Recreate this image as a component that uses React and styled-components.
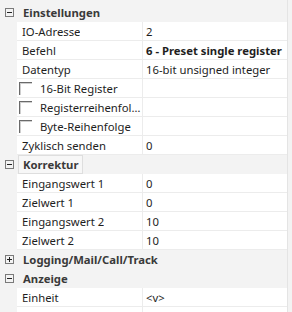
import React from "react";
import styled, { createGlobalStyle } from "styled-components";

const Global = createGlobalStyle`
  html, body { margin: 0; padding: 0; background: #f3f3f3; }
  body { font-family: "Noto Sans", "Segoe UI", sans-serif; font-size: 11.3px; color: #1e1e1e; }
  #root { width: 292px; height: 312px; overflow: hidden; }
`;

const Panel = styled.div`
  width: 288px;
  height: 312px;
  padding-top: 3px;
  box-sizing: border-box;
  border-right: 1px solid #e4e4e4;
  background: #f3f3f3;
`;

const CategoryRow = styled.div`
  display: grid;
  grid-template-columns: 17px 1fr;
  align-items: center;
  height: 19px;
  background: #f3f3f3;
`;

const Expander = styled.span`
  display: flex;
  justify-content: center;
  align-items: center;
  padding-left: 1px;
`;

const CategoryTitle = styled.span`
  justify-self: start;
  align-self: stretch;
  display: flex;
  align-items: center;
  box-sizing: border-box;
  font-weight: 700;
  color: #3a3a3a;
  padding: 0 4px;
  margin-left: 1px;
  white-space: nowrap;
  border: 1px solid ${(p) => (p.$focused ? "#dedede" : "transparent")};
  background: ${(p) => (p.$focused ? "#f7f7f7" : "transparent")};
`;

const PropRow = styled.div`
  display: grid;
  grid-template-columns: 17px 126px 1fr;
  height: 19px;
`;

const Gutter = styled.div`
  background: #f3f3f3;
`;

const Cell = styled.div`
  display: flex;
  align-items: center;
  gap: 8px;
  background: #fff;
  box-sizing: border-box;
  border-bottom: 1px solid #ececec;
  min-width: 0;
  white-space: nowrap;
  overflow: hidden;
`;

const LabelCell = styled(Cell)`
  border-right: 1px solid #ececec;
  padding-left: ${(p) => (p.$check ? "2px" : "5px")};
`;

const ValueCell = styled(Cell)`
  padding-left: 3px;
  font-weight: ${(p) => (p.$bold ? 700 : 400)};
`;

const LabelText = styled.span`
  overflow: hidden;
  text-overflow: ellipsis;
`;

const CheckBox = styled.span`
  flex: none;
  width: 13px;
  height: 13px;
  box-sizing: border-box;
  border-top: 1px solid #6a6a6a;
  border-left: 1px solid #6a6a6a;
  box-shadow: inset 1px 1px 0 #cfcfcf;
  background: #fff;
`;

const ExpandIcon = ({ open }) => (
  <svg width="9" height="9" viewBox="0 0 9 9">
    <rect x="0.5" y="0.5" width="8" height="8" fill="none" stroke="#7a7a7a" />
    <line x1="2" y1="4.5" x2="7" y2="4.5" stroke="#222" />
    {!open && <line x1="4.5" y1="2" x2="4.5" y2="7" stroke="#222" />}
  </svg>
);

const Category = ({ title, open = true, focused }) => (
  <CategoryRow>
    <Expander>
      <ExpandIcon open={open} />
    </Expander>
    <CategoryTitle $focused={focused}>{title}</CategoryTitle>
  </CategoryRow>
);

const Prop = ({ label, value, bold, check }) => (
  <PropRow>
    <Gutter />
    <LabelCell $check={check}>
      {check && <CheckBox />}
      <LabelText>{label}</LabelText>
    </LabelCell>
    <ValueCell $bold={bold}>{value}</ValueCell>
  </PropRow>
);

export default function App() {
  return (
    <>
      <Global />
      <Panel>
        <Category title="Einstellungen" />
        <Prop label="IO-Adresse" value="2" />
        <Prop label="Befehl" value="6 - Preset single register" bold />
        <Prop label="Datentyp" value="16-bit unsigned integer" />
        <Prop label="16-Bit Register" value="" check />
        <Prop label="Registerreihenfolge" value="" check />
        <Prop label="Byte-Reihenfolge" value="" check />
        <Prop label="Zyklisch senden" value="0" />
        <Category title="Korrektur" focused />
        <Prop label="Eingangswert 1" value="0" />
        <Prop label="Zielwert 1" value="0" />
        <Prop label="Eingangswert 2" value="10" />
        <Prop label="Zielwert 2" value="10" />
        <Category title="Logging/Mail/Call/Track" open={false} />
        <Category title="Anzeige" />
        <Prop label="Einheit" value="<v>" />
        <Prop label="" value="" />
      </Panel>
    </>
  );
}
